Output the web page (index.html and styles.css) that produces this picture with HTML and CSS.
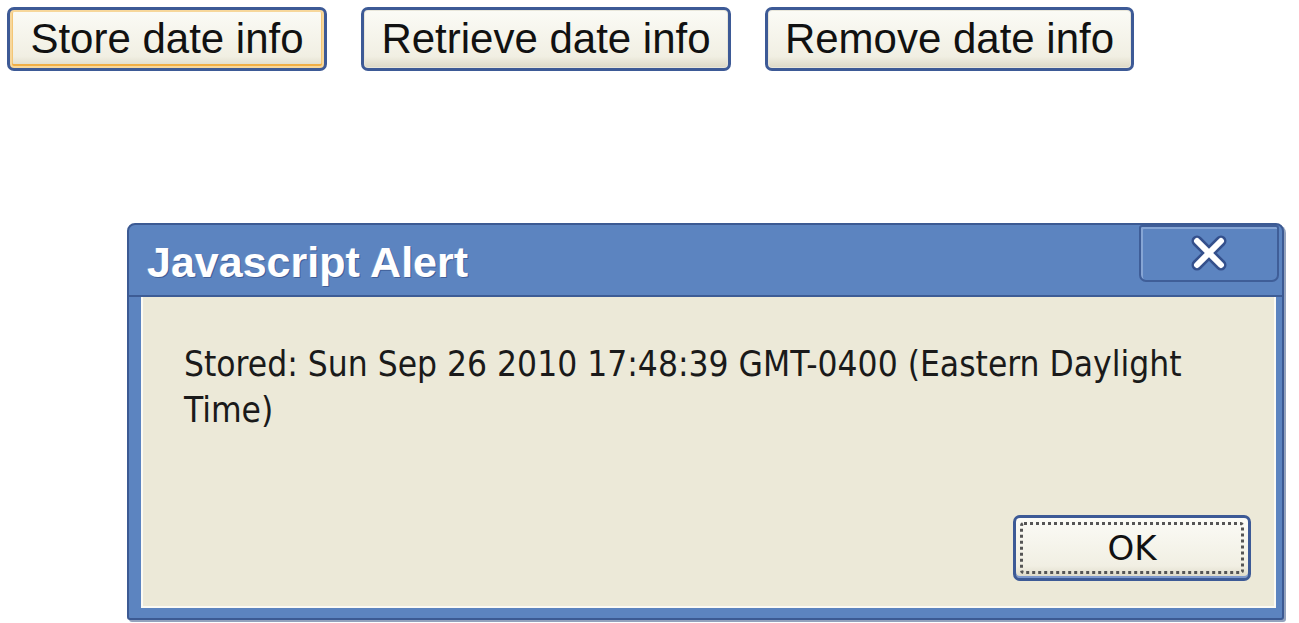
FILE: index.html
```html
<!DOCTYPE html>
<html>
<head>
<meta charset="utf-8">
<link rel="stylesheet" href="styles.css">
</head>
<body>
<div class="toolbar">
  <button class="btn btn-focus btn-store">Store date info</button>
  <button class="btn btn-retrieve">Retrieve date info</button>
  <button class="btn btn-remove">Remove date info</button>
</div>
<div class="dialog">
  <div class="titlebar">
    <span class="title">Javascript Alert</span>
    <span class="close">
      <svg width="48" height="40" viewBox="0 0 48 40">
        <path d="M12 8 L36 32 M36 8 L12 32" stroke="#34508c" stroke-width="11" stroke-linecap="round"/>
        <path d="M12 8 L36 32 M36 8 L12 32" stroke="#ffffff" stroke-width="6" stroke-linecap="round"/>
      </svg>
    </span>
  </div>
  <div class="body">
    <p class="message">Stored: Sun Sep 26 2010 17:48:39 GMT-0400 (Eastern Daylight Time)</p>
    <div class="actions">
      <button class="ok"><span class="ok-inner">OK</span></button>
    </div>
  </div>
</div>
</body>
</html>
```
FILE: styles.css
```css
html, body {
  margin: 0;
  padding: 0;
  background: #ffffff;
}
body {
  width: 1299px;
  height: 623px;
  overflow: hidden;
}
.toolbar {
  display: flex;
  gap: 34px;
  padding: 7px 0 0 7px;
}
.btn {
  height: 64px;
  padding: 0;
  font-family: "Liberation Sans", Arial, sans-serif;
  font-size: 42px;
  color: #111;
  background: linear-gradient(#fbfbf6, #f1efe3 80%, #dcd8c6);
  border: 3px solid #3d5a96;
  border-radius: 7px;
  box-shadow: inset 0 0 0 1px #e8e6da;
}
.btn-store { width: 320px; }
.btn-retrieve { width: 370px; }
.btn-remove { width: 369px; }
.btn-focus {
  box-shadow: inset 0 0 0 2px #f7d79b, inset 0 -3px 0 1px #f0ae45, inset 3px 0 0 0 #f3c676, inset -3px 0 0 0 #f3c676;
}
.dialog {
  margin: 152px 0 0 127px;
  width: 1157px;
  height: 397px;
  box-sizing: border-box;
  background: #5c84c0;
  border: 2px solid #3c5a93;
  border-radius: 8px 8px 3px 3px;
  padding: 0 6px 10px 12px;
  display: flex;
  flex-direction: column;
  box-shadow: 2px 2px 0 #93a2bd;
}
.titlebar {
  height: 70px;
  display: flex;
  align-items: center;
  justify-content: space-between;
  border-bottom: 2px solid #3d5c95;
  margin: 0 -6px 0 -12px;
  padding: 0 3px 0 18px;
}
.title {
  font-family: "Liberation Sans", Arial, sans-serif;
  font-weight: bold;
  font-size: 43px;
  color: #ffffff;
  padding-top: 4px;
  text-shadow: 1px 1px 0 #3f5e98, -1px 0 0 #6f8fc6;
}
.close {
  width: 140px;
  height: 57px;
  margin-top: -13px;
  box-sizing: border-box;
  border: 2px solid #3f5e98;
  border-radius: 3px 3px 7px 7px;
  background: #5c84c0;
  display: flex;
  align-items: center;
  justify-content: center;
  box-shadow: inset 2px 2px 0 #86a5d4;
}
.close svg {
  margin-top: -2px;
}
.body {
  flex: 1;
  background: #ece9d8;
  border: 2px solid #fbfaf4;
  border-top: none;
  display: flex;
  flex-direction: column;
}
.message {
  margin: 44px 60px 0 41px;
  font-family: "DejaVu Sans Condensed", "DejaVu Sans", sans-serif;
  font-size: 35px;
  line-height: 46px;
  color: #1a1a1a;
}
.actions {
  margin-top: auto;
  display: flex;
  justify-content: flex-end;
  padding: 0 23px 25px 0;
}
.ok {
  width: 238px;
  height: 66px;
  padding: 4px;
  border: 3px solid #3d5a96;
  border-radius: 7px;
  background: linear-gradient(#fbfbf6, #f1efe3 80%, #dcd8c6);
  box-shadow: inset 0 -2px 0 #7c98cc;
  display: flex;
}
.ok-inner {
  flex: 1;
  border: 3px dotted #555;
  border-radius: 4px;
  display: flex;
  align-items: center;
  justify-content: center;
  font-family: "DejaVu Sans", Tahoma, sans-serif;
  font-size: 34px;
  color: #111;
}
```
